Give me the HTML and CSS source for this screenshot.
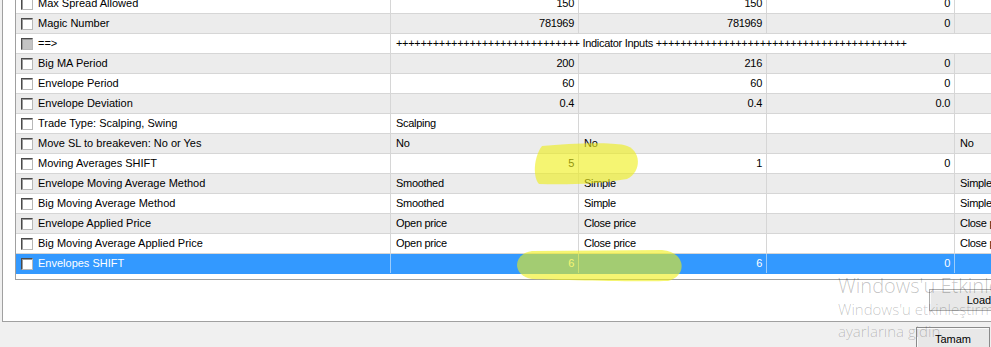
FILE: index.html
```html
<!DOCTYPE html>
<html lang="tr">
<head>
  <meta charset="UTF-8">
  <title>Inputs</title>
  <link rel="stylesheet" href="styles.css">
</head>
<body>
  <div class="tab">
    <div class="grid">
      <div class="row">
        <div class="name"><span class="box"></span>Max Spread Allowed</div>
        <div class="cell num">150</div><div class="cell num">150</div><div class="cell num">0</div><div class="cell"></div>
      </div>
      <div class="row alt">
        <div class="name"><span class="box"></span>Magic Number</div>
        <div class="cell num">781969</div><div class="cell num">781969</div><div class="cell num">0</div><div class="cell"></div>
      </div>
      <div class="row">
        <div class="name"><span class="box mixed"></span>==&gt;</div>
        <div class="cell wide">++++++++++++++++++++++++++++++ Indicator Inputs +++++++++++++++++++++++++++++++++++++++++</div>
      </div>
      <div class="row alt">
        <div class="name"><span class="box"></span>Big MA Period</div>
        <div class="cell num">200</div><div class="cell num">216</div><div class="cell num">0</div><div class="cell"></div>
      </div>
      <div class="row">
        <div class="name"><span class="box"></span>Envelope Period</div>
        <div class="cell num">60</div><div class="cell num">60</div><div class="cell num">0</div><div class="cell"></div>
      </div>
      <div class="row alt">
        <div class="name"><span class="box"></span>Envelope Deviation</div>
        <div class="cell num">0.4</div><div class="cell num">0.4</div><div class="cell num">0.0</div><div class="cell"></div>
      </div>
      <div class="row">
        <div class="name"><span class="box"></span>Trade Type: Scalping, Swing</div>
        <div class="cell">Scalping</div><div class="cell"></div><div class="cell"></div><div class="cell"></div>
      </div>
      <div class="row alt">
        <div class="name"><span class="box"></span>Move SL to breakeven: No or Yes</div>
        <div class="cell">No</div><div class="cell">No</div><div class="cell"></div><div class="cell">No</div>
      </div>
      <div class="row">
        <div class="name"><span class="box"></span>Moving Averages SHIFT</div>
        <div class="cell num">5</div><div class="cell num">1</div><div class="cell num">0</div><div class="cell"></div>
      </div>
      <div class="row alt">
        <div class="name"><span class="box"></span>Envelope Moving Average Method</div>
        <div class="cell">Smoothed</div><div class="cell">Simple</div><div class="cell"></div><div class="cell">Simple</div>
      </div>
      <div class="row">
        <div class="name"><span class="box"></span>Big Moving Average Method</div>
        <div class="cell">Smoothed</div><div class="cell">Simple</div><div class="cell"></div><div class="cell">Simple</div>
      </div>
      <div class="row alt">
        <div class="name"><span class="box"></span>Envelope Applied Price</div>
        <div class="cell">Open price</div><div class="cell">Close price</div><div class="cell"></div><div class="cell">Close price</div>
      </div>
      <div class="row">
        <div class="name"><span class="box"></span>Big Moving Average Applied Price</div>
        <div class="cell">Open price</div><div class="cell">Close price</div><div class="cell"></div><div class="cell">Close price</div>
      </div>
      <div class="row selected">
        <div class="name"><span class="box"></span>Envelopes SHIFT</div>
        <div class="cell num">6</div><div class="cell num">6</div><div class="cell num">0</div><div class="cell"></div>
      </div>
    </div>
    <div class="tab-buttons">
      <button class="btn wide-btn">Load</button>
      <button class="btn wide-btn">Save</button>
    </div>
  </div>

  <div class="footer">
    <button class="btn">Tamam</button>
  </div>

  <!-- marker strokes drawn over the screenshot -->
  <svg class="marks" width="991" height="347" viewBox="0 0 991 347">
    <path d="M542 146 C570 143 610 142 624 145 C642 149 642 172 627 179 C600 184 565 185 539 184 C533 178 533 158 542 146 Z"/>
    <path d="M532 251 L662 250 C686 252 688 276 668 281 C640 282 560 280 532 279 C512 276 512 254 532 251 Z"/>
  </svg>

  <div class="watermark">
    <div class="wm-title">Windows'u Etkinleştir</div>
    <div class="wm-line">Windows'u etkinleştirmek için Bilgisayar</div>
    <div class="wm-line">ayarlarına gidin.</div>
  </div>
</body>
</html>
```

FILE: styles.css
```css
html, body {
  margin: 0;
  overflow: hidden;
}
body {
  width: 991px;
  height: 347px;
  background-color: #f0f0f0;
  font-family: "Liberation Sans", Arial, sans-serif;
  font-size: 11px;
  color: #000;
  position: relative;
}
.tab {
  width: max-content;
  margin: -8px 0 0 2px;
  padding: 0 12px;
  background-color: #fff;
  border: 1px solid #a0a0a0;
}
.grid {
  border: 1px solid #a0a0a0;
  padding-bottom: 5px;
}
.row {
  display: grid;
  grid-template-columns: 374px repeat(4, 188px);
  height: 19px;
  line-height: 19px;
  border-bottom: 1px solid #d6d6d6;
  white-space: nowrap;
}
.row.alt {
  background-color: #ececec;
}
.row.selected {
  background-color: #3399ff;
  border-bottom-color: #3399ff;
  color: #fff;
}
.name {
  display: flex;
  align-items: center;
  gap: 5px;
  padding-left: 5px;
}
.box {
  width: 12px;
  height: 12px;
  box-sizing: border-box;
  background-color: #fff;
  border: 1px solid;
  border-color: #4a4a4a #b8b8b8 #b8b8b8 #4a4a4a;
  box-shadow: inset 1px 1px 0 #9a9a9a;
}
.box.mixed {
  background-color: #c4c4c4;
}
.cell {
  border-left: 1px solid #d6d6d6;
  padding: 0 4px 0 5px;
  letter-spacing: -0.3px;
  overflow: hidden;
}
.row.selected .cell {
  border-left-color: #9cccfb;
}
.num {
  text-align: right;
}
.wide {
  grid-column: 2 / 6;
}
.tab-buttons {
  display: flex;
  justify-content: flex-end;
  gap: 14px;
  padding: 9px 0 10px;
}
.btn {
  height: 22px;
  padding: 0;
  font-family: "Liberation Sans", Arial, sans-serif;
  font-size: 11px;
  color: #000;
  background-color: #e8e8e8;
  border: 1px solid #acacac;
  box-shadow: inset 1px 1px 0 #fafafa;
}
.wide-btn {
  width: 100px;
}
.footer {
  display: flex;
  justify-content: flex-end;
  padding: 5px 1px 0 0;
}
.footer .btn {
  width: 74px;
  height: 23px;
  border-color: #8a8a8a;
}
.marks {
  position: absolute;
  left: 0;
  top: 0;
  pointer-events: none;
}
.marks path {
  fill: rgba(238, 238, 20, 0.6);
}
.watermark {
  position: absolute;
  left: 838px;
  top: 274px;
  white-space: nowrap;
  font-family: "Open Sans", "Noto Sans", sans-serif;
  font-weight: 300;
  color: rgba(0, 0, 0, 0.24);
  pointer-events: none;
}
.wm-title {
  font-size: 20px;
  line-height: 24px;
}
.wm-line {
  font-size: 15px;
  line-height: 22px;
}
```
